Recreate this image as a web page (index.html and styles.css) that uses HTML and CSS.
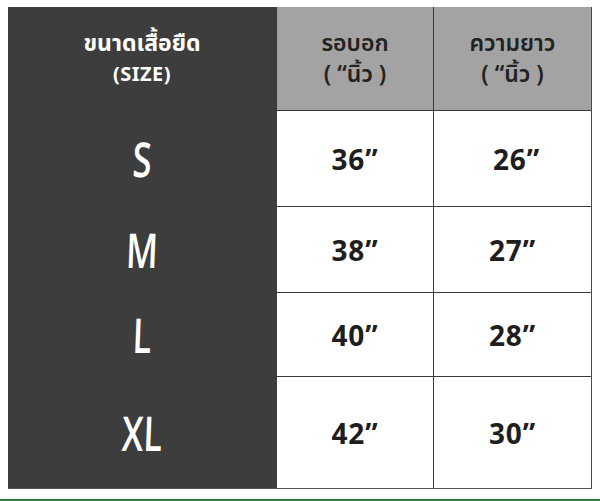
FILE: index.html
```html
<!DOCTYPE html>
<html lang="th">
<head>
<meta charset="utf-8">
<title>ขนาดเสื้อยืด</title>
<link rel="stylesheet" href="styles.css">
</head>
<body>
<div class="page">
  <div class="chart">
    <div class="cell head dark"><span>ขนาดเสื้อยืด</span><span class="en">(SIZE)</span></div>
    <div class="cell head gray"><span>รอบอก</span><span>( “นิ้ว )</span></div>
    <div class="cell head gray"><span>ความยาว</span><span>( “นิ้ว )</span></div>

    <div class="cell dark size"><span class="hand">S</span></div>
    <div class="cell num">36”</div>
    <div class="cell num shift">26”</div>

    <div class="cell dark size"><span class="hand">M</span></div>
    <div class="cell num">38”</div>
    <div class="cell num">27”</div>

    <div class="cell dark size"><span class="hand">L</span></div>
    <div class="cell num">40”</div>
    <div class="cell num">28”</div>

    <div class="cell dark size"><span class="hand">XL</span></div>
    <div class="cell num">42”</div>
    <div class="cell num">30”</div>
  </div>
  <div class="rule"></div>
</div>
</body>
</html>
```

FILE: styles.css
```css
html, body {
  margin: 0;
  padding: 0;
  background: #ffffff;
}
.page {
  width: 600px;
  height: 501px;
  padding: 7px 8px 0 8px;
  box-sizing: border-box;
  display: flex;
  flex-direction: column;
}
.chart {
  width: 584px;
  display: grid;
  grid-template-columns: 268px 156px 157px;
  grid-template-rows: 103px 95px 85px 83px 111px;
  column-gap: 1px;
  row-gap: 1px;
  background: #3a3a3a;
  border-right: 2px solid #4a4a4a;
  border-bottom: 1px solid #555;
  box-sizing: border-box;
}
.cell {
  display: flex;
  flex-direction: column;
  align-items: center;
  justify-content: center;
  background: #ffffff;
  color: #1e1e1e;
}
.dark {
  background: #3d3d3d;
  color: #ffffff;
}
.gray {
  background: #a3a3a3;
  color: #222222;
}
.head {
  font-family: "Noto Sans Thai", "Noto Sans", "Open Sans", sans-serif;
  font-weight: 600;
  font-size: 23px;
  line-height: 31px;
  padding-top: 2px;
}
.head.dark {
  font-weight: 700;
}
.head .en {
  font-size: 20px;
  letter-spacing: 0.5px;
}
.size {
  font-family: "Open Sans", "DejaVu Sans", sans-serif;
  font-weight: 600;
  font-size: 48px;
}
.hand {
  display: inline-block;
  transform: scaleX(0.72) skewX(-3deg);
  line-height: 1;
}
.num {
  font-family: "Open Sans", "Liberation Sans", sans-serif;
  font-weight: 700;
  font-size: 28px;
  letter-spacing: 0.8px;
}
.shift {
  padding-left: 8px;
}
.rule {
  margin-top: 10px;
  margin-left: -8px;
  width: 600px;
  height: 2px;
  background: #2e7d32;
}
```
